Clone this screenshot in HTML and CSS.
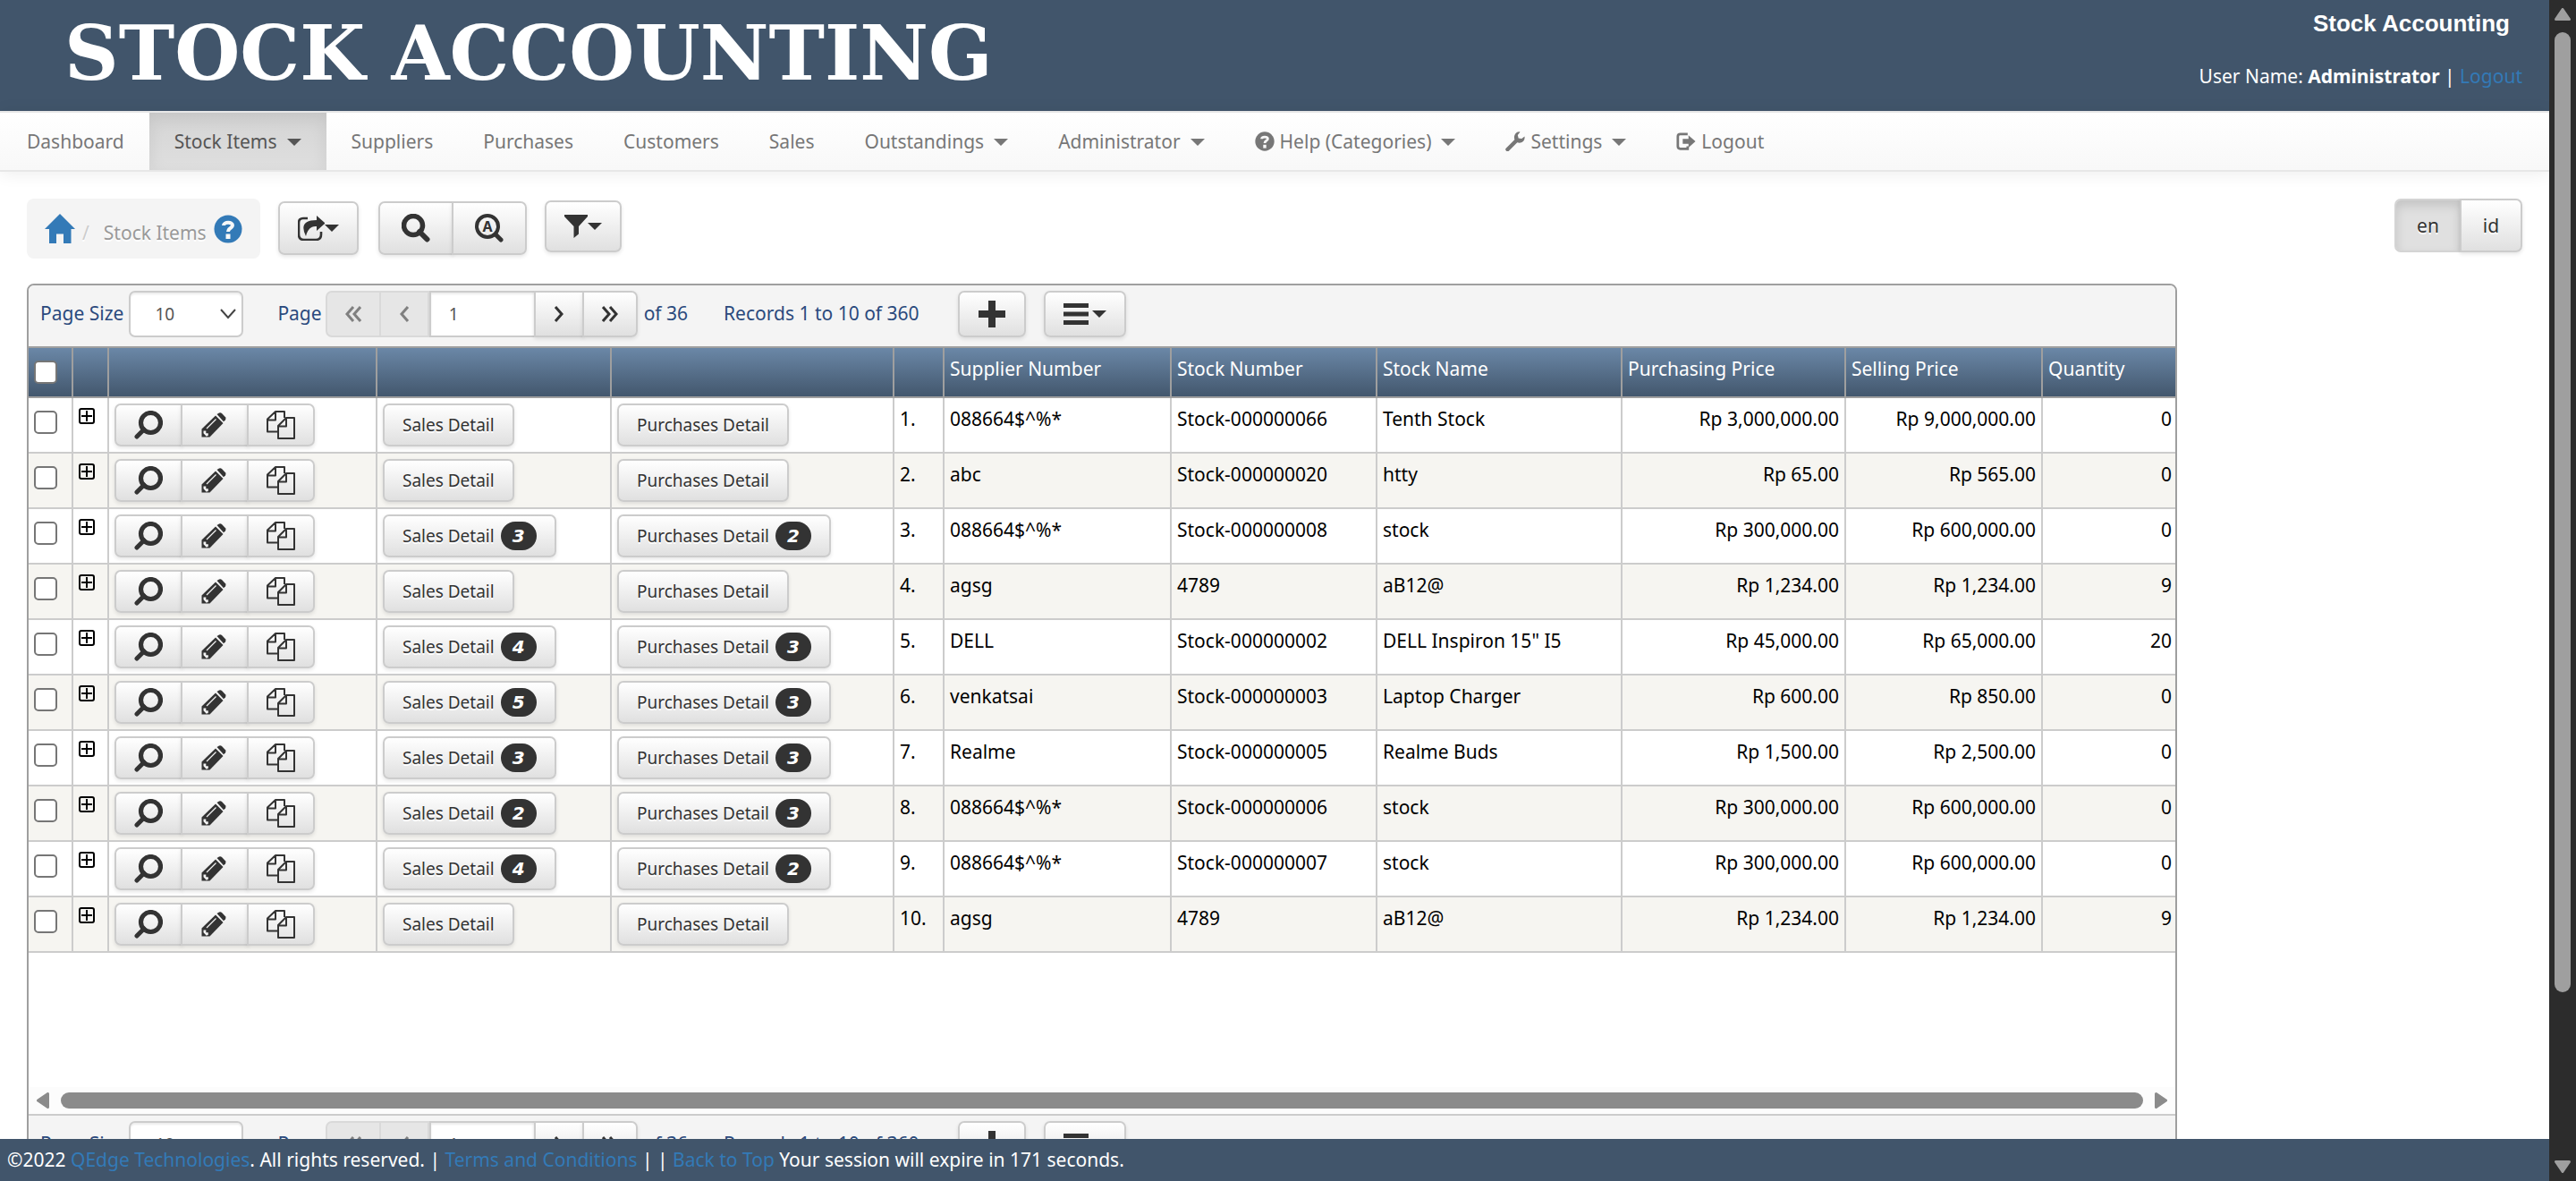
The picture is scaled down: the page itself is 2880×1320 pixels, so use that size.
FILE: index.html
```html
<!DOCTYPE html>
<html lang="en">
<head>
<meta charset="utf-8">
<title>Stock Accounting - Stock Items</title>
<link rel="stylesheet" href="styles.css">
</head>
<body>
<svg class="sprite" aria-hidden="true">
  <symbol id="i-search" viewBox="0 0 32 32"><circle cx="13" cy="13" r="10.5" fill="none" stroke="currentColor" stroke-width="5.5"/><path d="M20 20l8.5 8.5" stroke="currentColor" stroke-width="6" stroke-linecap="round"/></symbol>
  <symbol id="i-view" viewBox="0 0 32 32"><circle cx="18.5" cy="13.5" r="11" fill="none" stroke="currentColor" stroke-width="5.2"/><path d="M11 21l-8 8" stroke="currentColor" stroke-width="5" stroke-linecap="round"/></symbol>
  <symbol id="i-pencil" viewBox="0 0 32 32"><path d="M1.500 29.500v-9L17 5.500l8.500 8.500L10.500 29.500z" fill="currentColor"/><path d="M18.500 4l2.500-1.500q1.500-.8 3 .5l4 4.200q1 1.300 0 3l-2 2z" fill="currentColor"/><path d="M7 20L17.500 9.500" stroke="#f3f3f3" stroke-width="1.200"/><path d="M3.500 22.500h2.800v2.700h2.500v2.600l-2 1-3.300-3.500z" fill="#f3f3f3"/></symbol>
  <symbol id="i-copy" viewBox="0 0 32 32"><path d="M12 23.500H1V9.500L10 1h10v7M10 1v9.500H1M18.500 17.500H13V17L22 8h9v23H13V17.500H22V8" fill="none" stroke="currentColor" stroke-width="2" stroke-linejoin="round"/></symbol>
  <symbol id="i-expand" viewBox="0 0 18 18"><rect x="1" y="1" width="16" height="16" rx="2" fill="none" stroke="currentColor" stroke-width="2"/><path d="M3 9h12M9 3v12" stroke="currentColor" stroke-width="2"/></symbol>
  <symbol id="i-home" viewBox="0 0 34 34"><path d="M17 0l17 17h-4.500v16H21V22.500h-8V33H5V17H0z" fill="currentColor"/></symbol>
  <symbol id="i-help" viewBox="0 0 32 32"><circle cx="16" cy="16" r="15.500" fill="currentColor"/><path d="M11 12c0-4 10-4.500 10-.3 0 3.300-5 3-5 7.300" fill="none" stroke="#f8f8f8" stroke-width="4"/><path d="M13.500 21.500h5V27h-5z" fill="#f8f8f8"/></symbol>
  <symbol id="i-export" viewBox="0 0 30 28"><path d="M11 3H6Q1 3 1 8v13q0 6 6 6h13q6 0 6-6v-3" fill="none" stroke="currentColor" stroke-width="2.600"/><path d="M21 0l9.500 8.500L21 17v-5q-9-1-12 11-9-18 12-18z" fill="currentColor"/></symbol>
  <symbol id="i-filter" viewBox="0 0 26 26"><path d="M0 0h26v2L16 13v8.500L10.500 26V13L0 2z" fill="currentColor"/></symbol>
  <symbol id="i-caret" viewBox="0 0 16 8"><path d="M0 0h16L8 8z" fill="currentColor"/></symbol>
  <symbol id="i-wrench" viewBox="0 0 22 22"><path d="M2.500 20L12 10.500" stroke="currentColor" stroke-width="4.500" stroke-linecap="round"/><path d="M16.500.5L13.800 4l.9 3.500 3.500.6L21.500 5.500c.8 5-3.500 8.300-8 6.800l-3-3C8.500 5 12-.8 16.500.5z" fill="currentColor"/></symbol>
  <symbol id="i-logout" viewBox="0 0 24 22"><path d="M14 2H5Q2 2 2 5v12q0 3 3 3h9v-3" fill="none" stroke="currentColor" stroke-width="3"/><path d="M8 8h7V3.500l8.500 7.500-8.500 7.500V14H8z" fill="currentColor"/></symbol>
  <symbol id="i-plus" viewBox="0 0 30 30"><path d="M11 0h8v11h11v8H19v11h-8V19H0v-8h11z" fill="currentColor"/></symbol>
  <symbol id="i-list" viewBox="0 0 28 24"><path d="M0 0h28v5H0zM0 9.500h28v5H0zM0 19h28v5H0z" fill="currentColor"/></symbol>
  <symbol id="i-next" viewBox="0 0 12 18"><path d="M2 1l7 8-7 8" fill="none" stroke="currentColor" stroke-width="3"/></symbol>
  <symbol id="i-last" viewBox="0 0 18 18"><path d="M1 1l7 8-7 8M9 1l7 8-7 8" fill="none" stroke="currentColor" stroke-width="3"/></symbol>
  <symbol id="i-arrow" viewBox="0 0 18 14"><path d="M9 1.500L16.500 12.500h-15z" fill="currentColor" stroke="currentColor" stroke-width="3" stroke-linejoin="round"/></symbol>
</svg>
<div class="app">
  <header class="header">
    <div class="logo">STOCK ACCOUNTING</div>
    <div class="header-info">
      <div class="site-name">Stock Accounting</div>
      <div>User Name: <b>Administrator</b> | <a href="#logout">Logout</a></div>
    </div>
  </header>
  <nav class="nav">
    <a href="#">Dashboard</a>
    <a href="#" class="active">Stock Items<svg class="caret"><use href="#i-caret"/></svg></a>
    <a href="#">Suppliers</a>
    <a href="#">Purchases</a>
    <a href="#">Customers</a>
    <a href="#">Sales</a>
    <a href="#">Outstandings<svg class="caret"><use href="#i-caret"/></svg></a>
    <a href="#">Administrator<svg class="caret"><use href="#i-caret"/></svg></a>
    <a href="#"><svg class="nav-icon"><use href="#i-help"/></svg>Help (Categories)<svg class="caret"><use href="#i-caret"/></svg></a>
    <a href="#"><svg class="nav-icon"><use href="#i-wrench"/></svg>Settings<svg class="caret"><use href="#i-caret"/></svg></a>
    <a href="#"><svg class="nav-icon"><use href="#i-logout"/></svg>Logout</a>
  </nav>
  <main class="content">
    <div class="actions">
      <div class="breadcrumb">
        <a href="#" aria-label="Home"><svg class="icon-home"><use href="#i-home"/></svg></a>
        <span class="slash">/</span>
        <span class="crumb">Stock Items</span>
        <a href="#" aria-label="Help"><svg class="icon"><use href="#i-help"/></svg></a>
      </div>
      <button class="btn export" aria-label="Export"><svg class="icon-export"><use href="#i-export"/></svg><svg class="caret"><use href="#i-caret"/></svg></button>
      <div class="group search">
        <button class="btn" aria-label="Search"><svg class="icon"><use href="#i-search"/></svg></button>
        <button class="btn" aria-label="Advanced search"><svg class="icon" viewBox="0 0 32 32"><circle cx="14" cy="14" r="12" fill="none" stroke="currentColor" stroke-width="4"/><path d="M23 23l6 6" stroke="currentColor" stroke-width="5" stroke-linecap="round"/><text x="14" y="20" text-anchor="middle" class="auto-letter">A</text></svg></button>
      </div>
      <button class="btn filter" aria-label="Filter"><svg class="icon-filter"><use href="#i-filter"/></svg><svg class="caret"><use href="#i-caret"/></svg></button>
      <div class="group lang">
        <button class="btn pressed">en</button>
        <button class="btn">id</button>
      </div>
    </div>
    <section class="panel">
      <div class="toolbar">
        <label for="size-top">Page Size</label>
        <select id="size-top" class="field size"><option>10</option><option>20</option></select>
        <label for="page-top" class="page-label">Page</label>
        <div class="group pager">
          <button class="btn" disabled aria-label="First"><svg class="chev2 flip"><use href="#i-last"/></svg></button>
          <button class="btn narrow" disabled aria-label="Previous"><svg class="chev flip"><use href="#i-next"/></svg></button>
          <input id="page-top" class="field" type="text" value="1">
          <button class="btn narrow" aria-label="Next"><svg class="chev"><use href="#i-next"/></svg></button>
          <button class="btn" aria-label="Last"><svg class="chev2"><use href="#i-last"/></svg></button>
        </div>
        <span class="total">of 36</span>
        <span class="records">Records 1 to 10 of 360</span>
        <button class="btn add" aria-label="Add"><svg class="icon-plus"><use href="#i-plus"/></svg></button>
        <button class="btn list" aria-label="With selected"><svg class="icon-list"><use href="#i-list"/></svg><svg class="caret"><use href="#i-caret"/></svg></button>
      </div>
      <div class="grid">
        <table>
          <colgroup><col class="c-check"><col class="c-exp"><col class="c-act"><col class="c-sales"><col class="c-purch"><col class="c-no"><col class="c-supp"><col class="c-num"><col class="c-name"><col class="c-buy"><col class="c-sell"><col></colgroup>
          <thead>
            <tr><th><input type="checkbox" aria-label="Select all"></th><th></th><th></th><th></th><th></th><th></th><th>Supplier Number</th><th>Stock Number</th><th>Stock Name</th><th>Purchasing Price</th><th>Selling Price</th><th>Quantity</th></tr>
          </thead>
          <tbody>
            <tr>
              <td><input type="checkbox" aria-label="Select row 1"></td>
              <td><svg class="expand"><use href="#i-expand"/></svg></td>
              <td><div class="group row-actions"><button class="btn" aria-label="View"><svg class="icon"><use href="#i-view"/></svg></button><button class="btn" aria-label="Edit"><svg class="icon"><use href="#i-pencil"/></svg></button><button class="btn" aria-label="Copy"><svg class="icon"><use href="#i-copy"/></svg></button></div></td>
              <td><button class="btn detail">Sales Detail</button></td>
              <td><button class="btn detail">Purchases Detail</button></td>
              <td>1.</td><td>088664$^%*</td><td>Stock-000000066</td><td>Tenth Stock</td><td class="num">Rp 3,000,000.00</td><td class="num">Rp 9,000,000.00</td><td class="num">0</td>
            </tr>
            <tr>
              <td><input type="checkbox" aria-label="Select row 2"></td>
              <td><svg class="expand"><use href="#i-expand"/></svg></td>
              <td><div class="group row-actions"><button class="btn" aria-label="View"><svg class="icon"><use href="#i-view"/></svg></button><button class="btn" aria-label="Edit"><svg class="icon"><use href="#i-pencil"/></svg></button><button class="btn" aria-label="Copy"><svg class="icon"><use href="#i-copy"/></svg></button></div></td>
              <td><button class="btn detail">Sales Detail</button></td>
              <td><button class="btn detail">Purchases Detail</button></td>
              <td>2.</td><td>abc</td><td>Stock-000000020</td><td>htty</td><td class="num">Rp 65.00</td><td class="num">Rp 565.00</td><td class="num">0</td>
            </tr>
            <tr>
              <td><input type="checkbox" aria-label="Select row 3"></td>
              <td><svg class="expand"><use href="#i-expand"/></svg></td>
              <td><div class="group row-actions"><button class="btn" aria-label="View"><svg class="icon"><use href="#i-view"/></svg></button><button class="btn" aria-label="Edit"><svg class="icon"><use href="#i-pencil"/></svg></button><button class="btn" aria-label="Copy"><svg class="icon"><use href="#i-copy"/></svg></button></div></td>
              <td><button class="btn detail">Sales Detail<i class="badge">3</i></button></td>
              <td><button class="btn detail">Purchases Detail<i class="badge">2</i></button></td>
              <td>3.</td><td>088664$^%*</td><td>Stock-000000008</td><td>stock</td><td class="num">Rp 300,000.00</td><td class="num">Rp 600,000.00</td><td class="num">0</td>
            </tr>
            <tr>
              <td><input type="checkbox" aria-label="Select row 4"></td>
              <td><svg class="expand"><use href="#i-expand"/></svg></td>
              <td><div class="group row-actions"><button class="btn" aria-label="View"><svg class="icon"><use href="#i-view"/></svg></button><button class="btn" aria-label="Edit"><svg class="icon"><use href="#i-pencil"/></svg></button><button class="btn" aria-label="Copy"><svg class="icon"><use href="#i-copy"/></svg></button></div></td>
              <td><button class="btn detail">Sales Detail</button></td>
              <td><button class="btn detail">Purchases Detail</button></td>
              <td>4.</td><td>agsg</td><td>4789</td><td>aB12@</td><td class="num">Rp 1,234.00</td><td class="num">Rp 1,234.00</td><td class="num">9</td>
            </tr>
            <tr>
              <td><input type="checkbox" aria-label="Select row 5"></td>
              <td><svg class="expand"><use href="#i-expand"/></svg></td>
              <td><div class="group row-actions"><button class="btn" aria-label="View"><svg class="icon"><use href="#i-view"/></svg></button><button class="btn" aria-label="Edit"><svg class="icon"><use href="#i-pencil"/></svg></button><button class="btn" aria-label="Copy"><svg class="icon"><use href="#i-copy"/></svg></button></div></td>
              <td><button class="btn detail">Sales Detail<i class="badge">4</i></button></td>
              <td><button class="btn detail">Purchases Detail<i class="badge">3</i></button></td>
              <td>5.</td><td>DELL</td><td>Stock-000000002</td><td>DELL Inspiron 15" I5</td><td class="num">Rp 45,000.00</td><td class="num">Rp 65,000.00</td><td class="num">20</td>
            </tr>
            <tr>
              <td><input type="checkbox" aria-label="Select row 6"></td>
              <td><svg class="expand"><use href="#i-expand"/></svg></td>
              <td><div class="group row-actions"><button class="btn" aria-label="View"><svg class="icon"><use href="#i-view"/></svg></button><button class="btn" aria-label="Edit"><svg class="icon"><use href="#i-pencil"/></svg></button><button class="btn" aria-label="Copy"><svg class="icon"><use href="#i-copy"/></svg></button></div></td>
              <td><button class="btn detail">Sales Detail<i class="badge">5</i></button></td>
              <td><button class="btn detail">Purchases Detail<i class="badge">3</i></button></td>
              <td>6.</td><td>venkatsai</td><td>Stock-000000003</td><td>Laptop Charger</td><td class="num">Rp 600.00</td><td class="num">Rp 850.00</td><td class="num">0</td>
            </tr>
            <tr>
              <td><input type="checkbox" aria-label="Select row 7"></td>
              <td><svg class="expand"><use href="#i-expand"/></svg></td>
              <td><div class="group row-actions"><button class="btn" aria-label="View"><svg class="icon"><use href="#i-view"/></svg></button><button class="btn" aria-label="Edit"><svg class="icon"><use href="#i-pencil"/></svg></button><button class="btn" aria-label="Copy"><svg class="icon"><use href="#i-copy"/></svg></button></div></td>
              <td><button class="btn detail">Sales Detail<i class="badge">3</i></button></td>
              <td><button class="btn detail">Purchases Detail<i class="badge">3</i></button></td>
              <td>7.</td><td>Realme</td><td>Stock-000000005</td><td>Realme Buds</td><td class="num">Rp 1,500.00</td><td class="num">Rp 2,500.00</td><td class="num">0</td>
            </tr>
            <tr>
              <td><input type="checkbox" aria-label="Select row 8"></td>
              <td><svg class="expand"><use href="#i-expand"/></svg></td>
              <td><div class="group row-actions"><button class="btn" aria-label="View"><svg class="icon"><use href="#i-view"/></svg></button><button class="btn" aria-label="Edit"><svg class="icon"><use href="#i-pencil"/></svg></button><button class="btn" aria-label="Copy"><svg class="icon"><use href="#i-copy"/></svg></button></div></td>
              <td><button class="btn detail">Sales Detail<i class="badge">2</i></button></td>
              <td><button class="btn detail">Purchases Detail<i class="badge">3</i></button></td>
              <td>8.</td><td>088664$^%*</td><td>Stock-000000006</td><td>stock</td><td class="num">Rp 300,000.00</td><td class="num">Rp 600,000.00</td><td class="num">0</td>
            </tr>
            <tr>
              <td><input type="checkbox" aria-label="Select row 9"></td>
              <td><svg class="expand"><use href="#i-expand"/></svg></td>
              <td><div class="group row-actions"><button class="btn" aria-label="View"><svg class="icon"><use href="#i-view"/></svg></button><button class="btn" aria-label="Edit"><svg class="icon"><use href="#i-pencil"/></svg></button><button class="btn" aria-label="Copy"><svg class="icon"><use href="#i-copy"/></svg></button></div></td>
              <td><button class="btn detail">Sales Detail<i class="badge">4</i></button></td>
              <td><button class="btn detail">Purchases Detail<i class="badge">2</i></button></td>
              <td>9.</td><td>088664$^%*</td><td>Stock-000000007</td><td>stock</td><td class="num">Rp 300,000.00</td><td class="num">Rp 600,000.00</td><td class="num">0</td>
            </tr>
            <tr>
              <td><input type="checkbox" aria-label="Select row 10"></td>
              <td><svg class="expand"><use href="#i-expand"/></svg></td>
              <td><div class="group row-actions"><button class="btn" aria-label="View"><svg class="icon"><use href="#i-view"/></svg></button><button class="btn" aria-label="Edit"><svg class="icon"><use href="#i-pencil"/></svg></button><button class="btn" aria-label="Copy"><svg class="icon"><use href="#i-copy"/></svg></button></div></td>
              <td><button class="btn detail">Sales Detail</button></td>
              <td><button class="btn detail">Purchases Detail</button></td>
              <td>10.</td><td>agsg</td><td>4789</td><td>aB12@</td><td class="num">Rp 1,234.00</td><td class="num">Rp 1,234.00</td><td class="num">9</td>
            </tr>
          </tbody>
        </table>
      </div>
      <div class="hscroll" aria-hidden="true">
        <svg class="arrow left"><use href="#i-arrow"/></svg>
        <div class="thumb"></div>
        <svg class="arrow right"><use href="#i-arrow"/></svg>
      </div>
      <div class="toolbar bottom">
        <label for="size-bottom">Page Size</label>
        <select id="size-bottom" class="field size"><option>10</option><option>20</option></select>
        <label for="page-bottom" class="page-label">Page</label>
        <div class="group pager">
          <button class="btn" disabled aria-label="First"><svg class="chev2 flip"><use href="#i-last"/></svg></button>
          <button class="btn narrow" disabled aria-label="Previous"><svg class="chev flip"><use href="#i-next"/></svg></button>
          <input id="page-bottom" class="field" type="text" value="1">
          <button class="btn narrow" aria-label="Next"><svg class="chev"><use href="#i-next"/></svg></button>
          <button class="btn" aria-label="Last"><svg class="chev2"><use href="#i-last"/></svg></button>
        </div>
        <span class="total">of 36</span>
        <span class="records">Records 1 to 10 of 360</span>
        <button class="btn add" aria-label="Add"><svg class="icon-plus"><use href="#i-plus"/></svg></button>
        <button class="btn list" aria-label="With selected"><svg class="icon-list"><use href="#i-list"/></svg><svg class="caret"><use href="#i-caret"/></svg></button>
      </div>
    </section>
  </main>
  <footer class="footer">©2022 <a href="#">QEdge Technologies</a>. All rights reserved. | <a href="#">Terms and Conditions</a> | | <a href="#">Back to Top</a> Your session will expire in 171 seconds.</footer>
</div>
<div class="vscroll" aria-hidden="true">
  <svg class="arrow"><use href="#i-arrow"/></svg>
  <div class="track"><div class="thumb"></div></div>
  <svg class="arrow down"><use href="#i-arrow"/></svg>
</div>
</body>
</html>
```
FILE: styles.css
```css
* { box-sizing: border-box; }

body {
  margin: 0;
  height: 100vh;
  display: flex;
  overflow: hidden;
  background: #fff;
  color: #000;
  font: 21px/30px "Noto Sans", "Open Sans", sans-serif;
}

a { color: #337ab7; text-decoration: none; }
svg { display: block; flex: none; }
.sprite { position: absolute; width: 0; height: 0; }

.app {
  flex: 1;
  min-width: 0;
  display: flex;
  flex-direction: column;
}

/* Header */
.header {
  flex: none;
  height: 124px;
  display: flex;
  justify-content: space-between;
  padding: 10px 30px 0 72px;
  background: #41556b;
  color: #fff;
}
.logo { font: bold 84px/100px "DejaVu Serif", serif; white-space: nowrap; }
.header-info { text-align: right; }
.site-name {
  padding-right: 14px;
  margin-bottom: 28px;
  font: bold 26px/32px "Liberation Sans", sans-serif;
}

/* Navigation */
.nav {
  flex: none;
  display: flex;
  height: 68px;
  padding-left: 2px;
  border: solid #e7e7e7;
  border-width: 2px 0;
  background: linear-gradient(#fff, #f8f8f8);
  box-shadow: 0 2px 18px rgba(0, 0, 0, .075);
}
.nav a {
  display: flex;
  align-items: center;
  padding: 0 28px;
  color: #777;
  white-space: nowrap;
}
.nav a.active {
  color: #555;
  background: linear-gradient(#d4d4d4, #dfdfdf);
  box-shadow: inset 0 6px 18px rgba(0, 0, 0, .075);
}
.nav-icon { width: 22px; height: 22px; margin-right: 6px; }
.caret { width: 16px; height: 8px; }
.nav .caret { margin-left: 11px; margin-top: 2px; }

/* Buttons and fields */
.btn {
  display: flex;
  align-items: center;
  justify-content: center;
  height: 52px;
  margin: 0;
  padding: 0;
  border: 2px solid #ccc;
  border-radius: 7px;
  background: linear-gradient(#fff, #e0e0e0);
  box-shadow: 0 2px 4px rgba(0, 0, 0, .1);
  color: #333;
  font: inherit;
  text-shadow: 0 2px 0 #fff;
}
.btn:disabled {
  background: #e6e6e6;
  border-color: #d9d9d9;
  box-shadow: none;
  color: #808080;
}
.btn.pressed {
  background: #e0e0e0;
  border-color: #d4d4d4;
  box-shadow: inset 0 6px 12px rgba(0, 0, 0, .125);
}
.group { display: flex; }
.group > * { border-radius: 0; }
.group > * + * { margin-left: -2px; }
.group > :first-child { border-radius: 7px 0 0 7px; }
.group > :last-child { border-radius: 0 7px 7px 0; }

.field {
  height: 52px;
  margin: 0;
  border: 2px solid #ccc;
  border-radius: 7px;
  background-color: #fff;
  box-shadow: inset 0 2px 2px rgba(0, 0, 0, .075);
  color: #555;
  font: 19px/30px "Noto Sans", "Open Sans", sans-serif;
}
input[type="checkbox"] {
  appearance: none;
  display: block;
  width: 26px;
  height: 26px;
  margin: 6px 0 0;
  border: 2px solid #767676;
  border-radius: 5px;
  background: #fff;
}

.icon { width: 32px; height: 32px; }
.icon-home { width: 34px; height: 34px; }
.icon-export { width: 30px; height: 28px; }
.icon-filter { width: 26px; height: 26px; }
.icon-plus { width: 30px; height: 30px; }
.icon-list { width: 28px; height: 24px; }
.auto-letter { font: bold 16px "Noto Sans", sans-serif; fill: currentColor; text-shadow: none; }

/* Content */
.content { flex: 1; min-height: 0; overflow: hidden; padding: 30px 30px 0; }
.actions { display: flex; align-items: flex-start; height: 95px; }
.breadcrumb {
  display: flex;
  align-items: center;
  height: 67px;
  padding: 0 20px;
  margin-right: 20px;
  border-radius: 8px;
  background: #f4f4f4;
  text-shadow: 0 2px 0 #fff;
  white-space: nowrap;
}
.slash { padding: 8px 16px 0 8px; color: #ccc; }
.crumb { padding: 8px 8px 0 0; color: #999; }
.actions .btn { height: 60px; }
.actions .export { width: 90px; margin: 3px 22px 0 0; }
.search { margin: 3px 20px 0 0; }
.search .btn { width: 84px; }
.actions .filter { width: 86px; height: 58px; margin-top: 2px; }
.lang { margin-left: auto; }
.lang .btn { width: 70px; }
.lang .btn.pressed { width: 75px; }

/* Grid panel */
.panel {
  max-width: 2404px;
  border: 2px solid #9f9f9f;
  border-radius: 8px 8px 0 0;
  background: #fff;
  overflow: hidden;
}
.toolbar {
  display: flex;
  height: 68px;
  padding: 6px 13px;
  background: #f4f4f4;
  color: #2b4a7d;
  line-height: 50px;
  white-space: nowrap;
}
.toolbar.bottom { border-top: 2px solid #ccc; height: 70px; }
.size {
  width: 128px;
  margin: 0 38px 0 6px;
  padding: 0 12px 0 27px;
  appearance: none;
  background-image: url("data:image/svg+xml,%3Csvg xmlns='http://www.w3.org/2000/svg' width='18' height='12'%3E%3Cpath d='M1 1l8 9 8-9' fill='none' stroke='%23444' stroke-width='2'/%3E%3C/svg%3E");
  background-repeat: no-repeat;
  background-position: right 6px center;
}
.page-label { margin-right: 4px; }
.pager .btn { width: 62px; }
.pager .btn.narrow { width: 56px; }
.pager .field { width: 119px; padding: 0 20px; border-radius: 0; }
.chev { width: 12px; height: 18px; }
.chev2 { width: 18px; height: 18px; }
.flip { transform: rotate(180deg); }
.total { margin: 0 40px 0 7px; }
.records { margin-right: 43px; }
.add { width: 76px; margin-right: 20px; }
.list { width: 92px; gap: 4px; }

.grid { min-height: 828px; }
table {
  width: 100%;
  table-layout: fixed;
  border-collapse: separate;
  border-spacing: 0;
}
.c-check { width: 50px; }
.c-exp { width: 40px; }
.c-act { width: 300px; }
.c-sales { width: 262px; }
.c-purch { width: 316px; }
.c-no { width: 56px; }
.c-supp { width: 254px; }
.c-num { width: 230px; }
.c-name { width: 274px; }
.c-buy { width: 250px; }
.c-sell { width: 220px; }
th, td {
  height: 62px;
  padding: 8px 6px 0;
  border: solid #ccc;
  border-width: 0 2px 2px 0;
  text-align: left;
  vertical-align: top;
  font-weight: normal;
  white-space: nowrap;
}
th:last-child, td:last-child { border-right: 0; padding-right: 4px; }
th {
  height: 58px;
  border-color: #9f9f9f;
  border-top-width: 2px;
  color: #fff;
}
thead tr { background: linear-gradient(#6c89a9, #41556b); }
tbody tr:nth-child(even) { background: #f6f5f1; }
td.num { text-align: right; }
td:nth-child(-n+5) { padding-top: 6px; }
td input[type="checkbox"] { margin-top: 8px; }
.expand { width: 18px; height: 18px; margin-top: 5px; }
.row-actions .btn { width: 76px; height: 48px; }
.detail { height: 48px; padding: 0 20px; font-size: 19px; }
.badge {
  width: 40px;
  margin-left: 7px;
  border-radius: 16px;
  background: #333;
  color: #fff;
  font: italic bold 20px/32px "DejaVu Sans", sans-serif;
  text-shadow: none;
}

/* Scroll bars */
.arrow { width: 18px; height: 14px; }
.hscroll {
  display: flex;
  align-items: center;
  gap: 11px;
  height: 30px;
  padding: 0 7px;
  background: #fcfcfc;
  color: #8b8b8b;
}
.hscroll .thumb { flex: 1; height: 18px; border-radius: 9px; background: currentColor; }
.left { transform: rotate(-90deg); }
.right { transform: rotate(90deg); }
.vscroll {
  flex: none;
  width: 30px;
  display: flex;
  flex-direction: column;
  align-items: center;
  gap: 13px;
  padding: 9px 0;
  background: #2c2c2c;
  color: #9f9f9f;
}
.track { flex: 1; width: 18px; }
.track .thumb { height: 86%; border-radius: 9px; background: currentColor; }
.down { transform: rotate(180deg); }

/* Footer */
.footer {
  flex: none;
  height: 47px;
  padding: 0 8px;
  background: #41556b;
  color: #fff;
  line-height: 47px;
  white-space: nowrap;
}
```
